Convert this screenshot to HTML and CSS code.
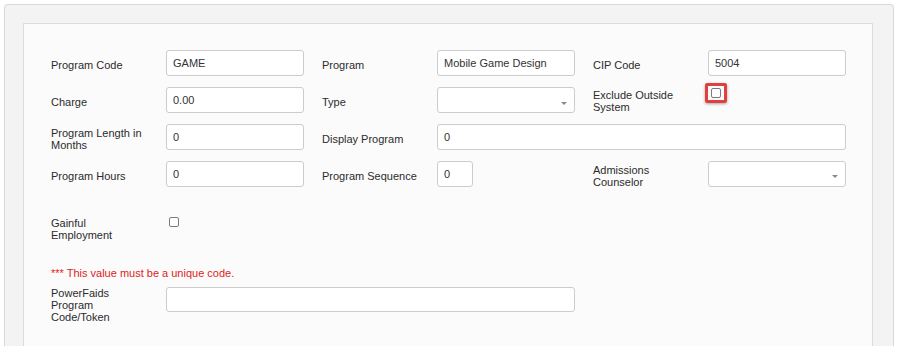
FILE: index.html
```html
<!DOCTYPE html>
<html>
<head>
<meta charset="utf-8">
<link rel="stylesheet" href="styles.css">
</head>
<body>
<div class="outer">
  <div class="card">
    <div class="grid">
      <div class="cell">
        <label class="lbl">Program Code</label>
        <div class="input">GAME</div>
      </div>
      <div class="cell">
        <label class="lbl">Program</label>
        <div class="input">Mobile Game Design</div>
      </div>
      <div class="cell">
        <label class="lbl">CIP Code</label>
        <div class="input">5004</div>
      </div>

      <div class="cell">
        <label class="lbl">Charge</label>
        <div class="input">0.00</div>
      </div>
      <div class="cell">
        <label class="lbl">Type</label>
        <div class="input select"></div>
      </div>
      <div class="cell cell-top">
        <label class="lbl lbl-top">Exclude Outside System</label>
        <span class="hl"><span class="check"></span></span>
      </div>

      <div class="cell">
        <label class="lbl">Program Length in Months</label>
        <div class="input">0</div>
      </div>
      <div class="cell span2">
        <label class="lbl">Display Program</label>
        <div class="input grow">0</div>
      </div>

      <div class="cell">
        <label class="lbl">Program Hours</label>
        <div class="input">0</div>
      </div>
      <div class="cell">
        <label class="lbl">Program Sequence</label>
        <div class="input small">0</div>
      </div>
      <div class="cell">
        <label class="lbl">Admissions Counselor</label>
        <div class="input select sel-low"></div>
      </div>
    </div>

    <div class="row gainful">
      <label class="lbl lbl-plain">Gainful Employment</label>
      <span class="check check-g"></span>
    </div>

    <p class="warn">*** This value must be a unique code.</p>

    <div class="row">
      <label class="lbl lbl-plain">PowerFaids Program Code/Token</label>
      <div class="input wide"></div>
    </div>
  </div>
</div>
</body>
</html>
```

FILE: styles.css
```css
html, body {
  margin: 0;
  padding: 0;
  height: 346px;
  overflow: hidden;
  background: #ffffff;
  font-family: "Liberation Sans", Arial, sans-serif;
  font-size: 11px;
  color: #2b2b2b;
}

.outer {
  margin: 4px 0 0 4px;
  width: 852px;
  height: 323px;
  border: 1px solid #d9d9d9;
  border-bottom: none;
  border-radius: 4px 4px 0 0;
  background: #f3f3f3;
  padding: 18px 18px 0 18px;
  box-sizing: content-box;
}

.card {
  border: 1px solid #dcdcdc;
  border-bottom: none;
  background: #fbfbfb;
  height: 323px;
  padding: 26px 27px 0 27px;
  box-sizing: border-box;
  width: 850px;
}

.grid {
  display: grid;
  grid-template-columns: 252.5px 252.5px 252.5px;
  column-gap: 18.5px;
  row-gap: 11px;
}

.cell {
  display: flex;
  align-items: center;
  min-height: 26px;
}

.cell-top {
  align-items: flex-start;
}

.span2 {
  grid-column: span 2;
}

.lbl {
  width: 115px;
  flex: none;
  line-height: 12px;
  padding-top: 2px;
  margin-bottom: -2px;
  padding-right: 17px;
  box-sizing: border-box;
}

.lbl-top {
  padding-top: 2px;
  margin-bottom: 0;
}

.lbl-plain {
  padding-top: 0;
  margin-bottom: 0;
}

.input {
  width: 137.5px;
  height: 26px;
  box-sizing: border-box;
  border: 1px solid #cccccc;
  border-radius: 3px;
  background: #ffffff;
  padding: 0 6px;
  line-height: 24px;
  color: #333333;
  flex: none;
  position: relative;
}

.grow {
  flex: 1;
  width: auto;
}

.small {
  width: 36px;
}

.wide {
  width: 409px;
  height: 25px;
}

.select::after {
  content: "";
  position: absolute;
  right: 7px;
  top: 14px;
  border-left: 3px solid transparent;
  border-right: 3px solid transparent;
  border-top: 3px solid #8a8a8a;
}

.sel-low::after {
  top: 13px;
}

.check {
  display: block;
  width: 10px;
  height: 10px;
  box-sizing: border-box;
  border: 1px solid #7a7a7a;
  border-radius: 2px;
  background: #ffffff;
}

.hl {
  position: relative;
  display: block;
  margin: 1px 0 0 3px;
}

.hl::after {
  content: "";
  position: absolute;
  left: -6px;
  top: -5px;
  width: 22px;
  height: 20px;
  box-sizing: border-box;
  border: 3px solid #e2403f;
  border-radius: 2px;
  box-shadow: 0 1px 3px rgba(0, 0, 0, 0.35);
}

.row {
  display: flex;
  align-items: flex-start;
}

.gainful {
  margin-top: 30px;
}

.check-g {
  margin-left: 3px;
}

.warn {
  margin: 26px 0 8px 0;
  line-height: 12px;
  color: #e01b1b;
}
```
